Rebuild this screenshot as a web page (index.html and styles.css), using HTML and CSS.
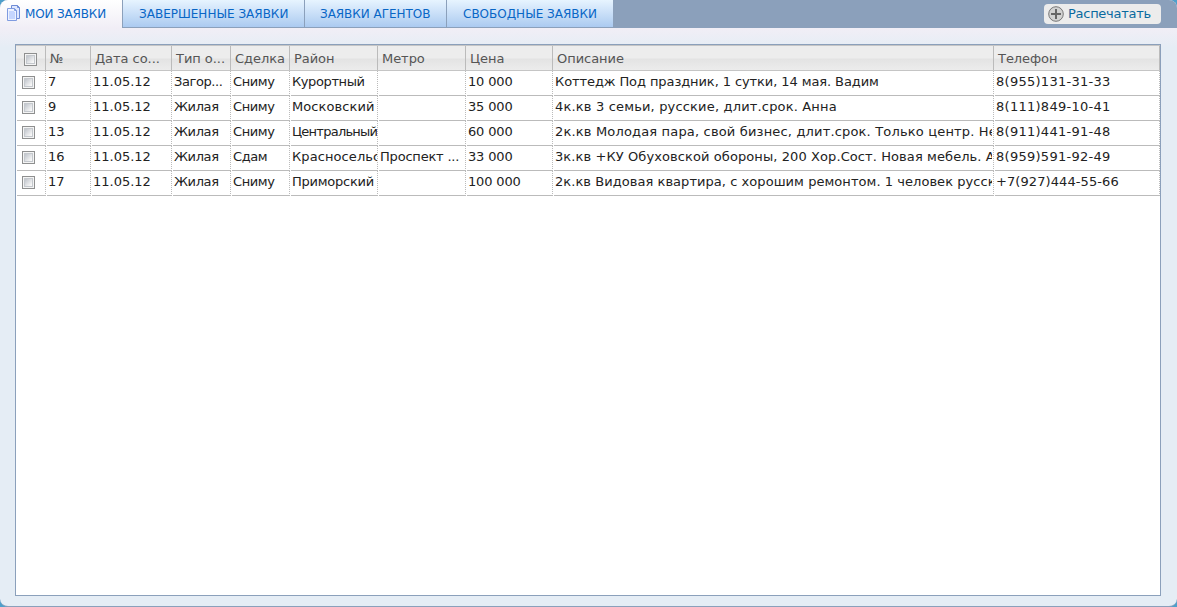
FILE: index.html
```
<!DOCTYPE html>
<html lang="ru">
<head>
<meta charset="utf-8">
<title>Мои заявки</title>
<link rel="stylesheet" href="styles.css">
</head>
<body>
<div class="window">
<header class="bar">
<nav class="tabs">
<a class="tab active"><svg width="14" height="17" viewBox="0 0 14 17"><path d="M4.500 .5h6l2 2v11h-8z" fill="#dfe8ff" stroke="#6f8cd6"/><path d="M10.500 .5v2h2" fill="none" stroke="#6f8cd6"/><path d="M.5 3.500h7l2 2v10h-9z" fill="#eef3ff" stroke="#7f9be0"/><path d="M2 6h5v1h1v7h-6z" fill="#c5d6ff"/><path d="M7.500 3.500v2h2" fill="none" stroke="#7f9be0"/></svg><span>МОИ ЗАЯВКИ</span></a>
<a class="tab t2"><span>ЗАВЕРШЕННЫЕ ЗАЯВКИ</span></a>
<a class="tab t3"><span>ЗАЯВКИ АГЕНТОВ</span></a>
<a class="tab t4"><span>СВОБОДНЫЕ ЗАЯВКИ</span></a>
</nav>
<button class="print"><svg width="16" height="16" viewBox="0 0 16 16"><circle cx="8" cy="8" r="7.300" fill="#d2d2d2" stroke="#777"/><path d="M8 3v10M3 8h10" stroke="#666" stroke-width="2"/></svg><span>Распечатать</span></button>
</header>
<main class="grid">
<div class="row head"><div><i class="box"></i></div><div>№</div><div>Дата со...</div><div>Тип о...</div><div>Сделка</div><div>Район</div><div>Метро</div><div>Цена</div><div>Описание</div><div>Телефон</div></div>
<div class="row"><div><i class="box"></i></div><div>7</div><div>11.05.12</div><div class="tight">Загор...</div><div class="tight">Сниму</div><div class="tight">Курортный</div><div></div><div class="price">10 000</div><div class="snug"><span class="desc">Коттедж Под праздник, 1 сутки, 14 мая. Вадим</span></div><div class="loose">8(955)131-31-33</div></div>
<div class="row"><div><i class="box"></i></div><div>9</div><div>11.05.12</div><div class="tight">Жилая</div><div class="tight">Сниму</div><div class="airy">Московский</div><div></div><div class="price">35 000</div><div class="wide"><span class="desc">4к.кв 3 семьи, русские, длит.срок. Анна</span></div><div class="loose">8(111)849-10-41</div></div>
<div class="row"><div><i class="box"></i></div><div>13</div><div>11.05.12</div><div class="tight">Жилая</div><div class="tight">Сниму</div><div class="tightest">Центральный</div><div></div><div class="price">60 000</div><div class="wide"><span class="desc">2к.кв Молодая пара, свой бизнес, длит.срок. Только центр. Не</span></div><div class="loose">8(911)441-91-48</div></div>
<div class="row"><div><i class="box"></i></div><div>16</div><div>11.05.12</div><div class="tight">Жилая</div><div class="tight">Сдам</div><div class="airy">Красносельс</div><div class="metro">Проспект ...</div><div class="price">33 000</div><div class="airy"><span class="desc">3к.кв +КУ Обуховской обороны, 200 Хор.Сост. Новая мебель. А</span></div><div class="loose">8(959)591-92-49</div></div>
<div class="row"><div><i class="box"></i></div><div>17</div><div>11.05.12</div><div class="tight">Жилая</div><div class="tight">Сниму</div><div class="district">Приморский</div><div></div><div class="price">100 000</div><div class="slight"><span class="desc">2к.кв Видовая квартира, с хорошим ремонтом. 1 человек русск</span></div><div class="airy">+7(927)444-55-66</div></div>
</main>
</div>
</body>
</html>
```
FILE: styles.css
```
* { box-sizing: border-box; }
body { margin: 0; background: #4f9fca; font: 13px/16px Verdana, "DejaVu Sans", sans-serif; }
.window { height: 607px; display: flex; flex-direction: column; overflow: hidden; border-bottom: 1px solid #8ba0bb; border-radius: 8px; background: linear-gradient(#f1eef6 28px, #e5edf5 48px); }
.bar { height: 28px; flex: none; display: flex; justify-content: space-between; background: #8ba0bb; }
.tabs { display: flex; }
.tab { height: 27px; display: flex; align-items: center; border-right: 1px solid #8ba0bb; background: linear-gradient(#e7f4ff, #abcaf0); color: #0866c6; white-space: nowrap; font-size: 12px; }
.active { width: 123px; height: 28px; padding: 0 0 1px 7px; gap: 4px; background: linear-gradient(#fff, #f1eef6); letter-spacing: -.15px; }
.t2 { width: 182px; padding-left: 16px; }
.t3 { width: 142px; padding-left: 15px; letter-spacing: -.04px; }
.t4 { width: 166px; padding-left: 16px; border: 0; }
.print { width: 117px; height: 20px; margin: 4px 16px 0 0; padding: 0 0 0 4px; display: flex; align-items: center; gap: 4px; border: 0; border-radius: 4px; background: #ececec; color: #0a6a9f; font: 13px/16px Verdana, "DejaVu Sans", sans-serif; letter-spacing: -.27px; white-space: nowrap; }
.grid { width: 1146px; height: 552px; margin: 16px 0 0 15px; border: 1px solid #8ba0bb; background: #fff; }
.row { height: 25px; display: grid; grid-template-columns: 30px 45px 81px 59px 59px 88px 88px 87px 441px 166px; color: #222; }
.row > div { margin-left: 1px; padding: 3px 0 0 1px; overflow: hidden; white-space: nowrap; border-right: 1px dotted #bbb; border-bottom: 1px solid #bbb; }
.row > div:first-child { padding: 5px 0 0 5px; }
.desc { display: block; margin-right: 1px; overflow: hidden; }
.row > .price { letter-spacing: -.15px; }
.row > .metro { letter-spacing: -.2px; }
.row > .tight { letter-spacing: -.4px; }
.row > .tightest { letter-spacing: -.75px; }
.row > .district { letter-spacing: -.25px; }
.row > .slight { letter-spacing: .05px; }
.row > .airy { letter-spacing: .09px; }
.row > .wide { letter-spacing: .17px; }
.row > .loose { letter-spacing: .27px; }
.row > .snug { letter-spacing: -.09px; }
.box { display: block; width: 13px; height: 13px; border: 1px solid #8e8f8f; background: linear-gradient(135deg, #c6cad0 25%, #f8f8f8 75%); box-shadow: inset 0 0 0 1px #f4f4f4, inset 0 0 0 2px #c4c8cd; }
.head { height: 26px; color: #555; background: linear-gradient(#ededed 0, #ededed 12px, #e3e3e3 13px, #ececec 100%); border-top: 1px solid #c5c5c5; border-bottom: 1px solid #c5c5c5; letter-spacing: -.05px; }
.row.head > div { margin-left: 0; padding: 5px 0 0 4px; border-right: 1px solid #bbb; border-bottom: 0; }
.row.head > div:first-child { padding: 7px 0 0 8px; }
```
